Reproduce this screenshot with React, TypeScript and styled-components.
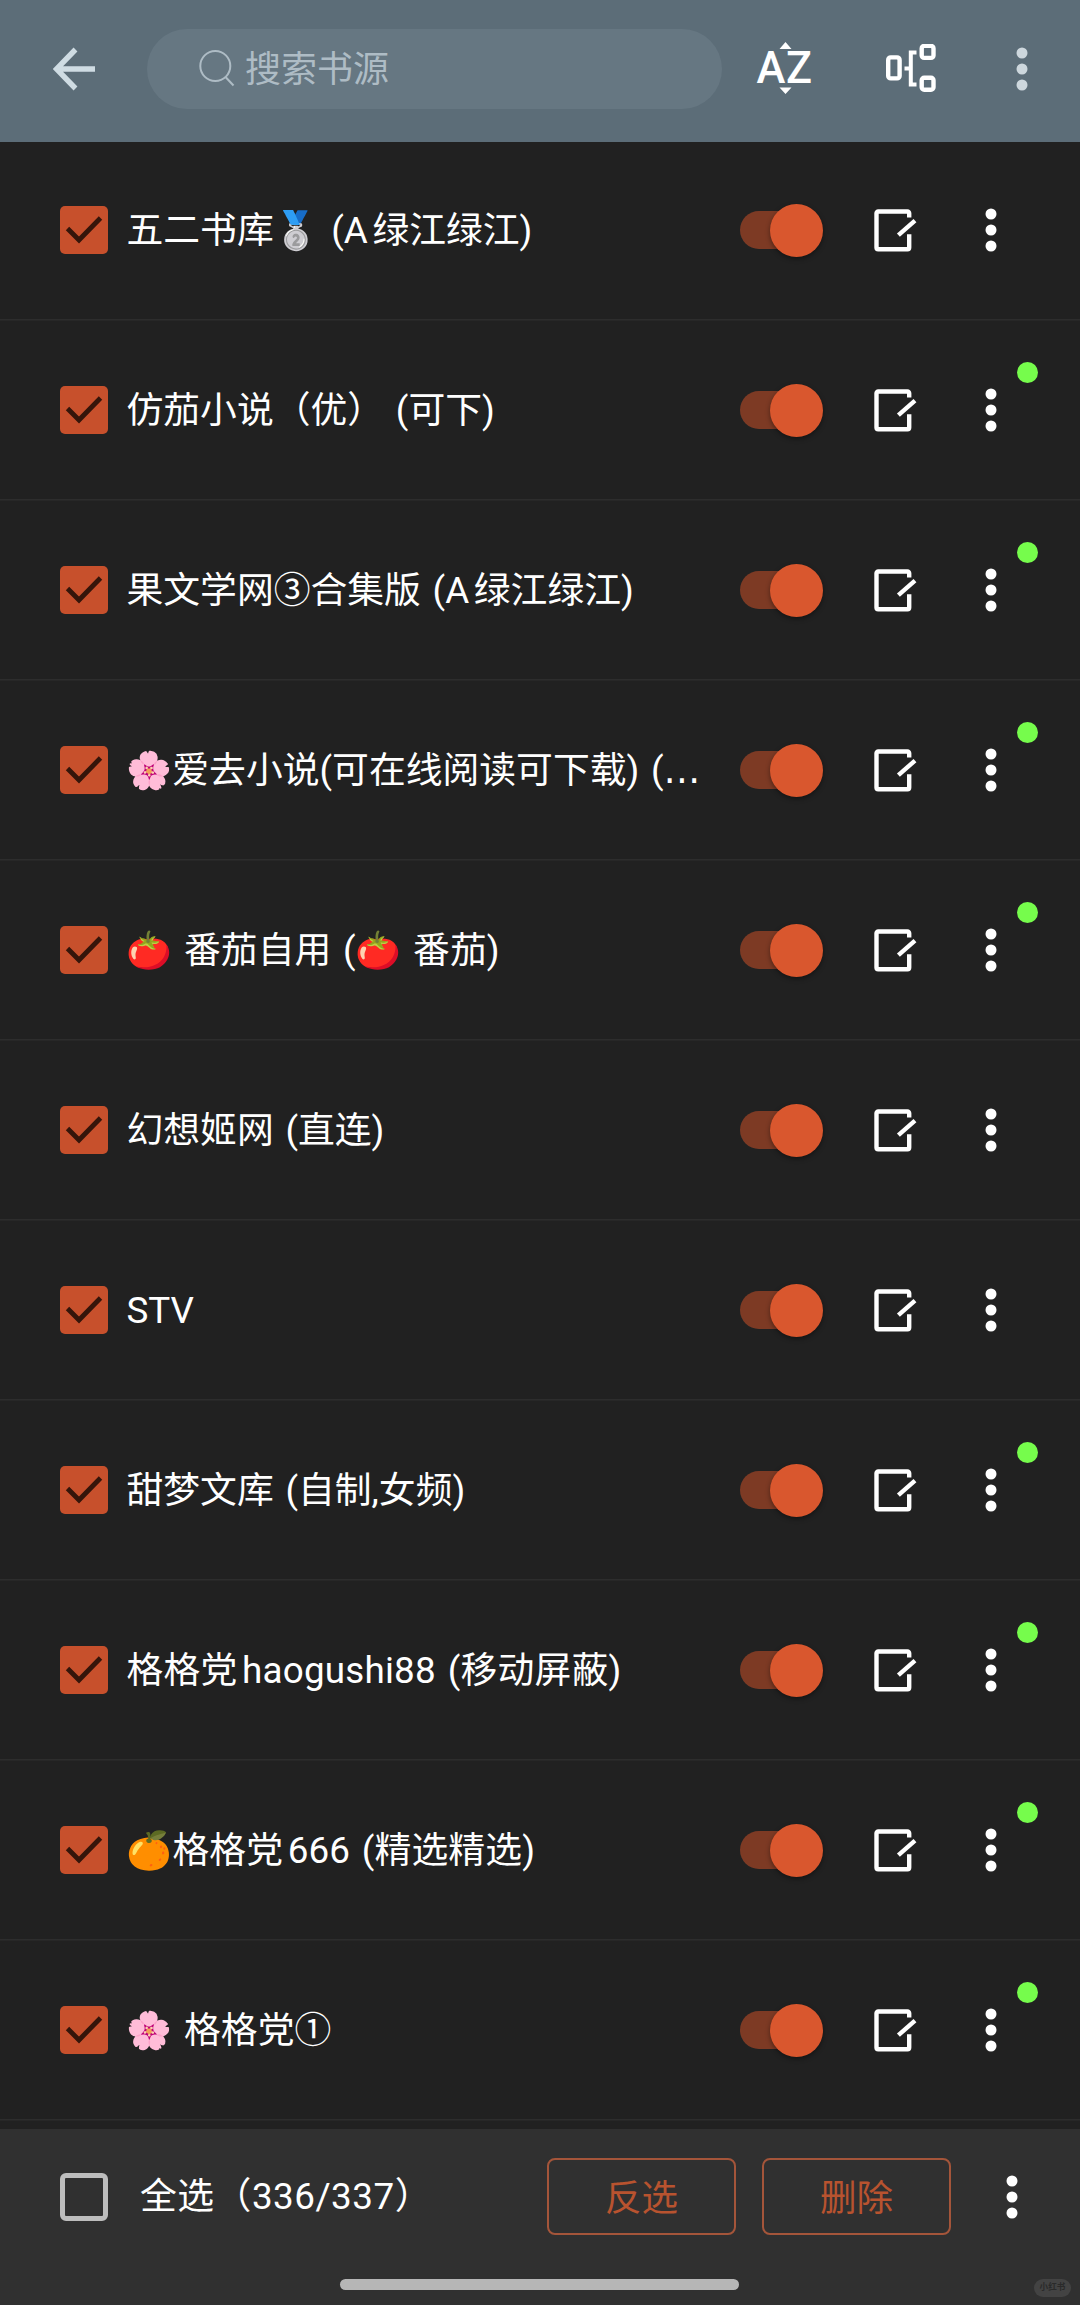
import React from 'react';
import styled, { createGlobalStyle } from 'styled-components';

const Global = createGlobalStyle`
  * { box-sizing: border-box; }
  html, body { margin: 0; padding: 0; background: #212121; }
  body { font-family: Roboto, "Noto Sans CJK SC", "Noto Color Emoji", sans-serif; }
  svg { display: block; flex: none; }
`;

const Screen = styled.div`
  width: 1080px;
  height: 2305px;
  display: flex;
  flex-direction: column;
  background: #212121;
  color: #fff;
  overflow: hidden;
`;

const Toolbar = styled.header`
  height: 142px;
  flex: none;
  display: flex;
  align-items: center;
  padding-bottom: 4px;
  background: #5c6d78;
`;

const IconSlot = styled.span<{ $left: number }>`
  display: flex;
  flex: none;
  margin-left: ${p => p.$left}px;
`;

const SearchBox = styled.div`
  width: 575px;
  height: 80px;
  margin-left: 52px;
  border-radius: 40px;
  background: #667782;
  display: flex;
  align-items: center;
  gap: 10px;
  padding-left: 52px;
`;

const Hint = styled.span`
  font-size: 36px;
  line-height: 52px;
  padding-top: 1px;
  color: #aebcc5;
`;

const List = styled.main`
  flex: none;
  display: flex;
  flex-direction: column;
  height: 1987px;
  margin-top: -2px;
`;

const Row = styled.div`
  position: relative;
  height: 180px;
  flex: none;
  display: flex;
  align-items: center;
  padding-left: 60px;
  box-shadow: inset 0 -1px #2d2d2d, 0 1px #272727;
`;

const Name = styled.span<{ $spacing: number }>`
  width: 614px;
  padding-left: 18.5px;
  padding-top: 1px;
  font-size: 36.8px;
  line-height: 54px;
  letter-spacing: ${p => p.$spacing}px;
  word-spacing: 2.6px;
  white-space: pre;
  text-autospace: normal;
`;

const Ellipsis = styled.span`
  font-family: "DejaVu Sans", sans-serif;
  line-height: 1;
`;

const Track = styled.span`
  width: 83px;
  height: 38px;
  margin-right: 51px;
  border-radius: 19px;
  background: linear-gradient(90deg, #7d3a24 56px, transparent 56px);
  display: flex;
  align-items: center;
  justify-content: flex-end;
`;

const Thumb = styled.span`
  width: 53px;
  height: 53px;
  flex: none;
  border-radius: 50%;
  background: #d9572e;
  box-shadow: 0 2px 5px rgba(0, 0, 0, 0.4);
`;

const Status = styled.span`
  position: absolute;
  left: 1017px;
  top: 42px;
  width: 21px;
  height: 21px;
  border-radius: 50%;
  background: #76fc4c;
`;

const Footer = styled.footer`
  flex: 1;
  display: flex;
  flex-direction: column;
  position: relative;
  margin-top: 2px;
  background: #303030;
`;

const Actions = styled.div`
  height: 77px;
  margin-top: 29px;
  display: flex;
  align-items: center;
  padding-left: 60px;
`;

const EmptyBox = styled.span`
  width: 48px;
  height: 48px;
  border: 5.5px solid #bdbdbd;
  border-radius: 6px;
`;

const Total = styled.span`
  width: 406px;
  padding-left: 32px;
  font-size: 36.8px;
  line-height: 54px;
  letter-spacing: 0.5px;
  white-space: pre;
`;

const Button = styled.button`
  width: 189px;
  height: 77px;
  padding: 0 0 3px;
  margin: 0 26px 0 0;
  border: 2px solid #a4553a;
  border-radius: 8px;
  background: transparent;
  color: #b8532f;
  font: inherit;
  font-size: 36.6px;
`;

const HomeBar = styled.div`
  width: 399px;
  height: 11px;
  margin: 44px 0 0 340px;
  border-radius: 6px;
  background: #b6b6b6;
`;

const Mark = styled.span`
  position: absolute;
  right: 9px;
  bottom: 8px;
  width: 37px;
  height: 18px;
  border-radius: 9px;
  background: #434343;
  color: #2a2a2a;
  font-size: 8.6px;
  font-weight: 700;
  line-height: 17px;
  text-align: center;
`;

const Dots = ({ color = '#fff' }: { color?: string }) => (
  <svg width="12" height="44" viewBox="0 0 12 44" fill={color}>
    <circle cx="6" cy="6" r="5.5" />
    <circle cx="6" cy="22" r="5.5" />
    <circle cx="6" cy="38" r="5.5" />
  </svg>
);

const Checked = () => (
  <svg width="48" height="48" viewBox="0 0 48 48">
    <rect width="48" height="48" rx="5" fill="#c7502c" />
    <path d="M7.5 22.5 L19 34 L40.5 12" fill="none" stroke="#35150a" strokeWidth="4.8" />
  </svg>
);

const Edit = () => (
  <svg width="43" height="43" viewBox="0 0 43 43" fill="none" stroke="#fff" strokeWidth="4.4">
    <path d="M35.2 8.6V4.2a1.7 1.7 0 0 0-1.7-1.7H4.2A1.7 1.7 0 0 0 2.5 4.2V38.6a1.7 1.7 0 0 0 1.7 1.7H33.5a1.7 1.7 0 0 0 1.7-1.7V25.2" />
    <path d="M24.4 26.2L41 11.6" />
  </svg>
);

const Back = () => (
  <svg width="42" height="44" viewBox="0 0 42 44" fill="none" stroke="#cfdce3" strokeWidth="5.4">
    <path d="M42 22H4M22.5 2.5L3.5 22L22.5 41.5" />
  </svg>
);

const Search = () => (
  <svg width="36" height="38" viewBox="0 0 36 38" fill="none" stroke="#aebcc5" strokeWidth="2">
    <circle cx="16.3" cy="16" r="15" />
    <path d="M26.5 27L34.5 35.5" />
  </svg>
);

const SortAZ = () => (
  <svg width="56" height="54" viewBox="0 0 56 54" fill="#fff">
    <path d="M29.5 0L35.5 7H23.5ZM23.5 45.5H35.5L29.5 52Z" />
    <text x="0.5" y="41.3" fontFamily="Roboto, sans-serif" fontWeight="500" fontSize="43.5">A</text>
    <text x="30" y="41.3" fontFamily="Roboto, sans-serif" fontWeight="500" fontSize="43.5" textLength="26" lengthAdjust="spacingAndGlyphs">Z</text>
  </svg>
);

const Tree = () => (
  <svg width="50" height="50" viewBox="0 0 50 50" fill="none" stroke="#fff" strokeWidth="4.4">
    <rect x="2.2" y="13.4" width="11.4" height="21" rx="2.5" />
    <rect x="35.7" y="1.9" width="11.8" height="12" rx="2.5" />
    <rect x="35.7" y="33.8" width="11.8" height="12" rx="2.5" />
    <path d="M30.5 8.4H24.8V40.4H30.5M24.8 24.4H18.5" strokeWidth="4" />
  </svg>
);

type Source = { name: string; online?: boolean; spacing?: number; cut?: boolean };

const sources: Source[] = [
  { name: '五二书库🥈 (A绿江绿江)' },
  { name: '仿茄小说（优） (可下)', online: true },
  { name: '果文学网③合集版 (A绿江绿江)', online: true },
  { name: '🌸爱去小说(可在线阅读可下载) (', online: true, cut: true },
  { name: '🍅 番茄自用 (🍅 番茄)', online: true },
  { name: '幻想姬网 (直连)' },
  { name: 'STV' },
  { name: '甜梦文库 (自制,女频)', online: true },
  { name: '格格党haogushi88 (移动屏蔽)', online: true, spacing: 0.2 },
  { name: '🍊格格党666 (精选精选)', online: true, spacing: 0.1 },
  { name: '🌸 格格党①', online: true },
];

export default function App() {
  return (
    <Screen>
      <Global />
      <Toolbar>
        <IconSlot $left={53}><Back /></IconSlot>
        <SearchBox>
          <Search />
          <Hint>搜索书源</Hint>
        </SearchBox>
        <IconSlot $left={34}><SortAZ /></IconSlot>
        <IconSlot $left={74}><Tree /></IconSlot>
        <IconSlot $left={80}><Dots color="#cdd7dd" /></IconSlot>
      </Toolbar>
      <List>
        {sources.map(s => (
          <Row key={s.name}>
            <Checked />
            <Name $spacing={s.spacing ?? 0}>{s.name}{s.cut && <Ellipsis>…</Ellipsis>}</Name>
            <IconSlot $left={18}><Track><Thumb /></Track></IconSlot>
            <Edit />
            <IconSlot $left={68}><Dots /></IconSlot>
            {s.online && <Status />}
          </Row>
        ))}
      </List>
      <Footer>
        <Actions>
          <EmptyBox />
          <Total>全选（336/337）</Total>
          <IconSlot $left={33}><Button>反选</Button><Button>删除</Button></IconSlot>
          <IconSlot $left={29}><Dots /></IconSlot>
        </Actions>
        <HomeBar />
        <Mark>小红书</Mark>
      </Footer>
    </Screen>
  );
}
